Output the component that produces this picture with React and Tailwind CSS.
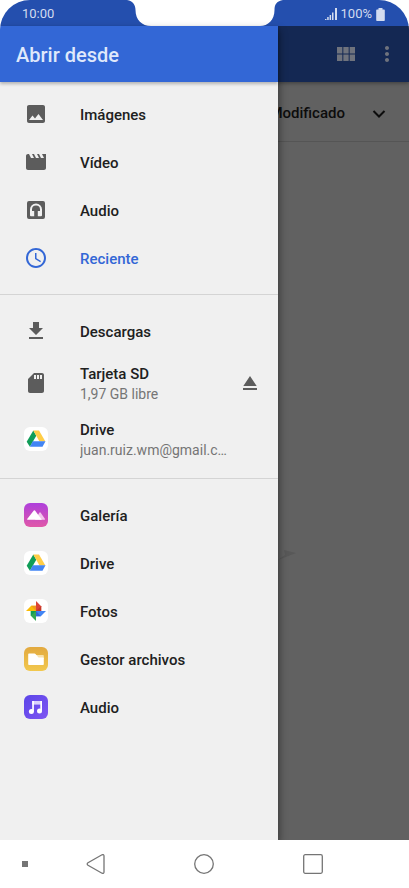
import {
  MdAccessTime,
  MdEject,
  MdFileDownload,
  MdImage,
  MdMoreVert,
  MdMovie,
  MdSdCard,
  MdViewModule,
} from 'react-icons/md';

const HeadphonesBox = () => (
  <svg viewBox="0 0 24 24" className="size-6" fill="currentColor">
    <path
      fillRule="evenodd"
      d="M5 3h14a2 2 0 0 1 2 2v14a2 2 0 0 1-2 2H5a2 2 0 0 1-2-2V5a2 2 0 0 1 2-2zM12 5.5A6 6 0 0 0 6 11.500V17.200a1 1 0 0 0 1 1H10.200V13H8v-1.500a4 4 0 0 1 8 0V13h-2.200v5.200H17a1 1 0 0 0 1-1V11.500A6 6 0 0 0 12 5.500z"
    />
  </svg>
);

const DriveIcon = () => (
  <svg viewBox="0 0 24 24" className="size-6">
    <rect width="24" height="24" rx="6" fill="#fff" />
    <path d="M9.300 3.500L2.700 14.700l3.200 5.100L12.300 8.700z" fill="#109d58" />
    <path d="M9.300 3.500h5.700l6.400 10.900h-5.900z" fill="#ffcd46" />
    <path d="M8.800 14.300h12.700l-3 5.500H5.900z" fill="#4285f4" />
  </svg>
);

const GalleryIcon = () => (
  <svg viewBox="0 0 24 24" className="size-6">
    <defs>
      <linearGradient id="gallery" x1="0" y1="0" x2="0" y2="1">
        <stop offset="0" stopColor="#ae3fdc" />
        <stop offset="1" stopColor="#e058a8" />
      </linearGradient>
    </defs>
    <rect width="24" height="24" rx="6" fill="url(#gallery)" />
    <path d="M11 16.800l4.500-7.300q.5-.6 1 0l4.500 6.500q.4.800-.6.800z" fill="#f3c6ec" />
    <path d="M3.700 16.800q-1 0-.5-.8L9.800 7.500q.6-.6 1.200 0l6.800 9.300z" fill="#fff" />
  </svg>
);

const PhotosIcon = () => (
  <svg viewBox="0 0 24 24" className="size-6">
    <rect width="24" height="24" rx="6" fill="#fff" />
    <path d="M12 2v10h5.200V7.200z" fill="#db4437" />
    <path d="M22 12H12v5.200h4.800z" fill="#4285f4" />
    <path d="M12 22V12H6.800v4.800z" fill="#34a853" />
    <path d="M2 12h10V6.800H7.200z" fill="#fbbc05" />
    <path d="M12 12V6.800H7.200z" fill="#f29a1f" />
    <path d="M12 12h5.200V7.200z" fill="#c53929" />
    <path d="M12 12v5.200h4.800z" fill="#3367d6" />
    <path d="M12 12H6.800v4.800z" fill="#0f9d58" />
  </svg>
);

const FilesIcon = () => (
  <svg viewBox="0 0 24 24" className="size-6">
    <defs>
      <linearGradient id="files" x1="0" y1="0" x2="0" y2="1">
        <stop offset="0" stopColor="#e2a93f" />
        <stop offset="1" stopColor="#f2c84e" />
      </linearGradient>
    </defs>
    <rect width="24" height="24" rx="6" fill="url(#files)" />
    <path d="M11 8h8q.8 0 .8.800V12h-6z" fill="#f9e3ac" />
    <path d="M5 6.500h5.500q.6 0 1 .5l3 3.500h4.700q.6 0 .6.700v6q0 .8-.8.800H5q-.8 0-.8-.8V7.300q0-.8.8-.8z" fill="#fff" />
  </svg>
);

const MusicIcon = () => (
  <svg viewBox="0 0 24 24" className="size-6">
    <defs>
      <linearGradient id="music" x1="0" y1="0" x2="1" y2="1">
        <stop offset="0" stopColor="#5b45e8" />
        <stop offset="1" stopColor="#7f56f2" />
      </linearGradient>
    </defs>
    <rect width="24" height="24" rx="6" fill="url(#music)" />
    <path d="M8.200 6h9.800v3.600H8.200z" fill="#d9d0fb" />
    <path d="M8.200 6h1.700v10.500H8.200zM16.300 6H18v10h-1.700z" fill="#fff" />
    <circle cx="7.400" cy="16.600" r="2.500" fill="#fff" />
    <circle cx="15.500" cy="16" r="2.500" fill="#fff" />
  </svg>
);

const sections = [
  {
    padding: 'pt-2 pb-3',
    items: [
      { label: 'Imágenes', icon: <MdImage size={24} /> },
      { label: 'Vídeo', icon: <MdMovie size={24} /> },
      { label: 'Audio', icon: <HeadphonesBox /> },
      { label: 'Reciente', icon: <MdAccessTime size={24} />, active: true },
    ],
  },
  {
    padding: 'pt-3 pb-[11px]',
    items: [
      { label: 'Descargas', icon: <MdFileDownload size={24} /> },
      { label: 'Tarjeta SD', detail: '1,97 GB libre', icon: <MdSdCard size={24} />, eject: true },
      { label: 'Drive', detail: 'juan.ruiz.wm@gmail.c…', icon: <DriveIcon /> },
    ],
  },
  {
    padding: 'pt-3 pb-3',
    items: [
      { label: 'Galería', icon: <GalleryIcon /> },
      { label: 'Drive', icon: <DriveIcon /> },
      { label: 'Fotos', icon: <PhotosIcon /> },
      { label: 'Gestor archivos', icon: <FilesIcon /> },
      { label: 'Audio', icon: <MusicIcon /> },
    ],
  },
];

const DrawerItem = ({ item }) => (
  <li className={`flex items-center pl-6 pr-4 ${item.detail ? 'h-14' : 'h-12'}`}>
    <button
      type="button"
      className={`flex min-w-0 flex-1 items-center gap-8 text-left ${item.active ? 'text-[#3367d6]' : 'text-[#5c5c5c]'}`}
    >
      <span className="shrink-0">{item.icon}</span>
      <span className="min-w-0 flex-1 pt-0.5">
        <span className={`block text-[15px] leading-5 font-medium ${item.active ? '' : 'text-[#202020]'}`}>
          {item.label}
        </span>
        {item.detail && (
          <span className="block truncate text-sm leading-5 text-[#757575]">{item.detail}</span>
        )}
      </span>
    </button>
    {item.eject && (
      <button type="button" aria-label="Expulsar" className="text-[#5c5c5c]">
        <MdEject size={24} />
      </button>
    )}
  </li>
);

const StatusBar = () => (
  <div className="relative flex h-[26px] items-center justify-between bg-[#244fae] pr-6 pl-[22px] text-[13px] text-[#d3dcf0]">
    <span className="pt-0.5">10:00</span>
    {/* Notch */}
    <svg viewBox="0 0 164 26" className="absolute top-0 left-1/2 h-[26px] w-[164px] -translate-x-1/2" fill="#fff">
      <path d="M4 0C10 1 12.500 5 12.500 10C12.500 20 19 26 28 26H137C145 26 151.500 20 151.500 10C151.500 4 154 1 160 0z" />
    </svg>
    <div className="flex items-center gap-1 pt-0.5">
      <svg viewBox="0 0 12 12" className="size-3" fill="currentColor">
        <path d="M0 11h1.500v1H0zM2.200 9h1.500v3H2.200zM4.600 7h1.500v5H4.600zM7 4.500h1.500V12H7zM10 0h2v12h-2z" />
      </svg>
      <span>100%</span>
      <svg viewBox="0 0 9 13" className="h-[13px] w-[9px]" fill="currentColor">
        <path d="M2.500 0h4v1.500H8q.8 0 .8.800v9.900q0 .8-.8.800H1q-.8 0-.8-.8V2.300q0-.8.800-.8h1.500z" />
      </svg>
    </div>
  </div>
);

const App = () => {
  return (
    <div className="flex min-h-screen flex-col bg-white font-['Roboto',sans-serif]">
      <div className="flex flex-1 flex-col overflow-hidden rounded-t-[30px]">
        <StatusBar />
        <div className="flex flex-1">
          {/* Drawer */}
          <aside className="z-10 flex w-[68%] flex-col bg-[#f0f0f0] shadow-[1px_4px_8px_rgba(0,0,0,0.45)]">
            <header className="flex h-14 items-center bg-[#3367d6] px-4 pt-0.5 shadow-[0_2px_3px_rgba(0,0,0,0.25)]">
              <h1 className="text-xl font-medium text-[#dfe8fb]">Abrir desde</h1>
            </header>
            <nav className="divide-y divide-[#d4d4d4]">
              {sections.map((section, i) => (
                <ul key={i} className={section.padding}>
                  {section.items.map((item) => (
                    <DrawerItem key={item.label} item={item} />
                  ))}
                </ul>
              ))}
            </nav>
          </aside>
          {/* Dimmed file list */}
          <main className="relative flex min-w-0 flex-1 flex-col overflow-hidden bg-[#616161]">
            <div className="flex h-14 items-center justify-end gap-[17px] bg-[#142853] pr-[10px] text-[#6f737d] shadow-[0_1px_4px_rgba(0,0,0,0.4)]">
              <button type="button" aria-label="Vista de cuadrícula">
                <MdViewModule size={24} />
              </button>
              <button type="button" aria-label="Más opciones">
                <MdMoreVert size={24} />
              </button>
            </div>
            <button
              type="button"
              className="flex h-[60px] items-center justify-end gap-[22px] border-b border-[#555] pt-1 pr-[18px] text-[15px] font-medium text-[#0c0c0c]"
            >
              Modificado
              <svg viewBox="0 0 24 24" className="size-6 shrink-0" fill="none" stroke="currentColor" strokeWidth="2">
                <path d="M6.500 9l5.500 5.500L17.500 9" />
              </svg>
            </button>
            <svg viewBox="0 0 18 12" className="absolute top-[523px] left-0 h-3 w-[18px]" fill="#585858">
              <path d="M0 11l7-5-1-5 12 3z" />
            </svg>
          </main>
        </div>
      </div>
      {/* Navigation bar */}
      <footer className="flex h-12 items-center bg-white text-[#757575]">
        <div className="flex w-[12%] justify-center">
          <span className="size-1.5 bg-[#757575]" />
        </div>
        <button type="button" aria-label="Atrás" className="flex w-[23%] justify-center">
          <svg viewBox="0 0 20 20" className="size-5" fill="none" stroke="currentColor" strokeWidth="1.300">
            <path d="M16 .8Q18 .1 18 2v16q0 1.900-2 1.200L2 11.200Q.4 10 2 8.800z" />
          </svg>
        </button>
        <button type="button" aria-label="Inicio" className="flex w-[30%] justify-center">
          <svg viewBox="0 0 20 20" className="size-5" fill="none" stroke="currentColor" strokeWidth="1.300">
            <circle cx="10" cy="10" r="9.300" />
          </svg>
        </button>
        <button type="button" aria-label="Aplicaciones recientes" className="flex w-[23%] justify-center">
          <svg viewBox="0 0 20 20" className="size-5" fill="none" stroke="currentColor" strokeWidth="1.300">
            <rect x=".7" y=".7" width="18.600" height="18.600" rx="1.500" />
          </svg>
        </button>
      </footer>
    </div>
  );
};

export default App;
